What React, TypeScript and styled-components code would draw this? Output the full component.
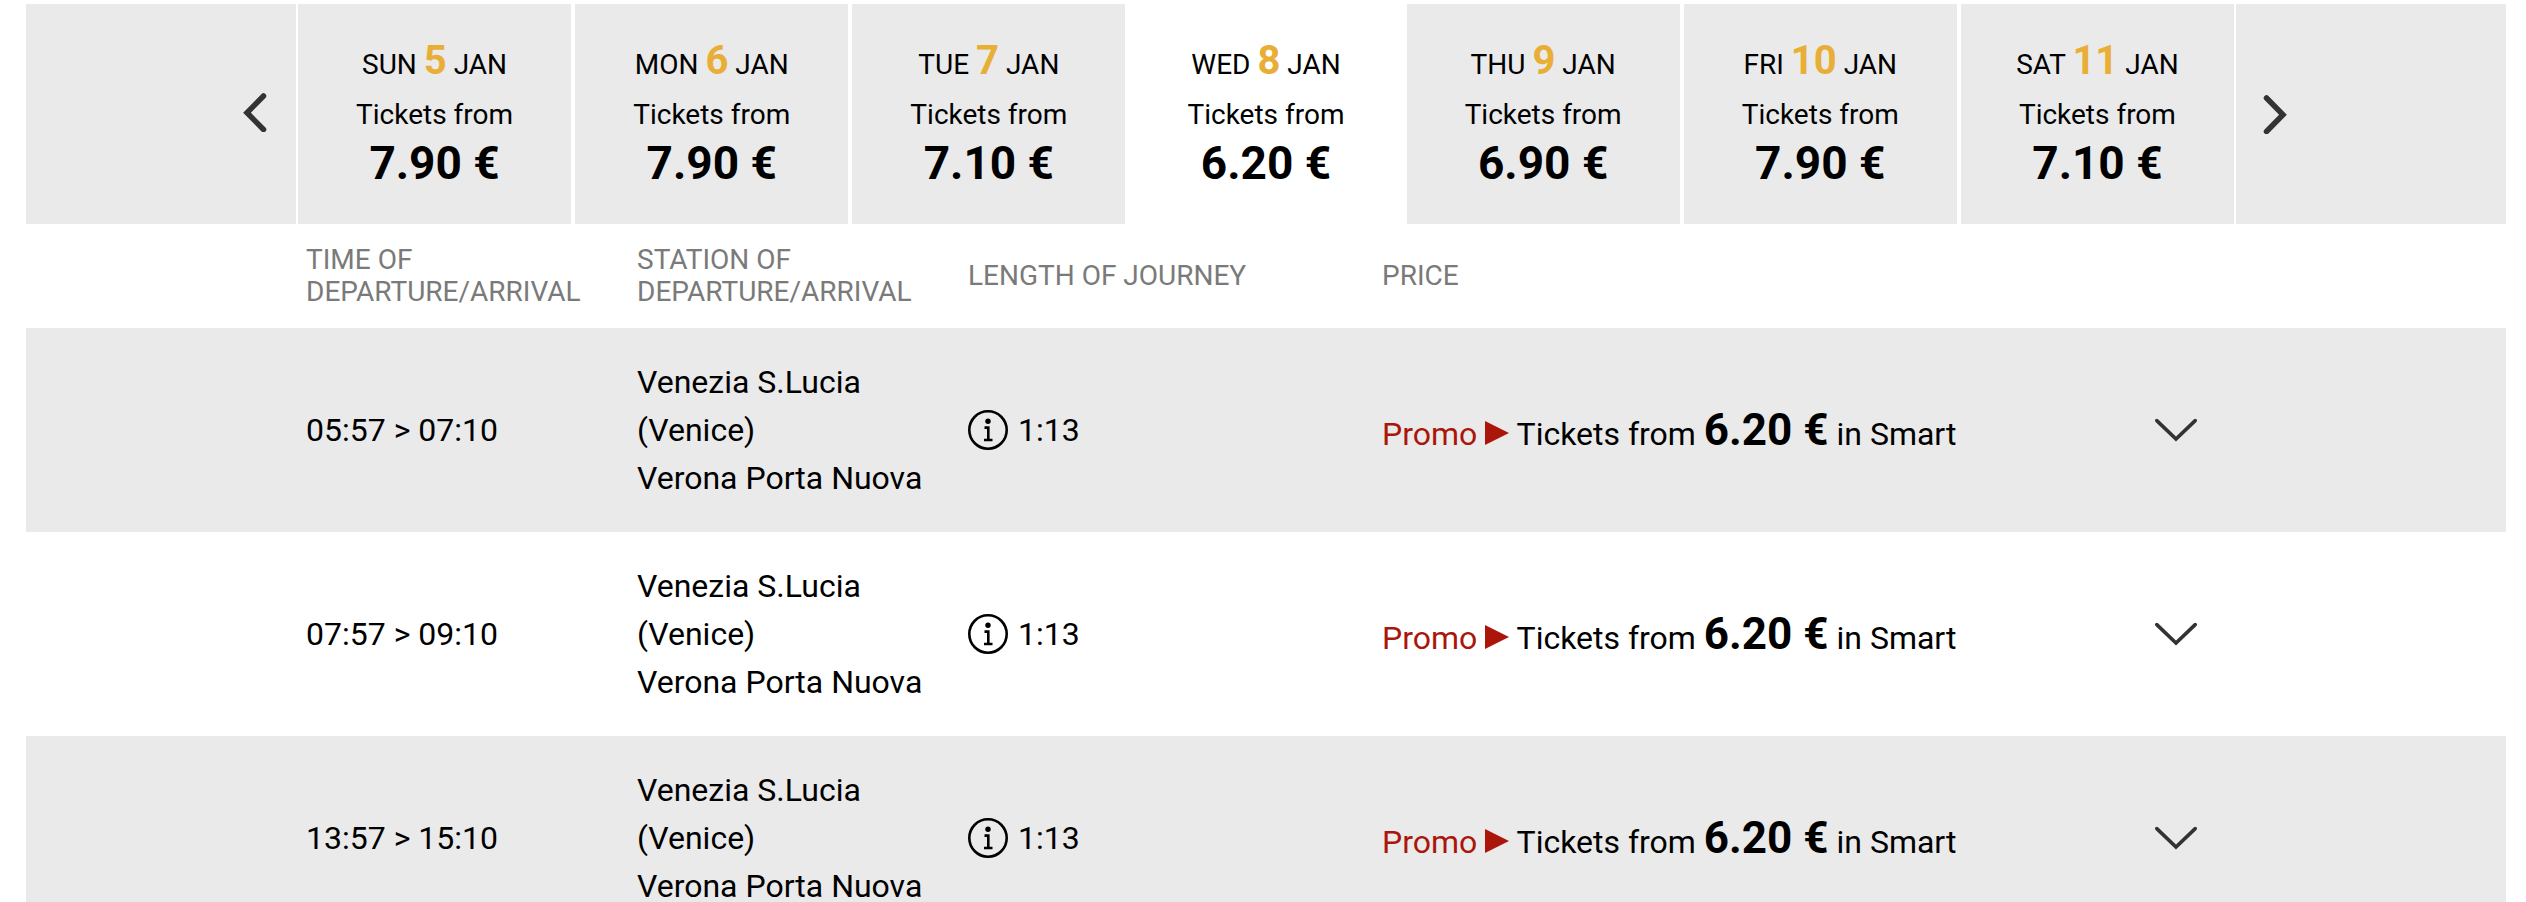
import React from "react";
import styled, { createGlobalStyle } from "styled-components";

const GlobalStyle = createGlobalStyle`
  *, *::before, *::after { box-sizing: border-box; }
  body {
    margin: 0;
    background: #fff;
    color: #000;
    font-family: Roboto, "Liberation Sans", sans-serif;
  }
`;

const Page = styled.main`
  padding: 4px 20px 0 26px;
`;

const DateBar = styled.nav`
  display: grid;
  grid-template-columns: minmax(80px, 1fr) minmax(0, 1940px) minmax(80px, 1fr);
  height: 220px;
`;

const ArrowButton = styled.button<{ $side: "left" | "right" }>`
  display: flex;
  align-items: center;
  justify-content: ${(p) => (p.$side === "left" ? "flex-end" : "flex-start")};
  padding: ${(p) => (p.$side === "left" ? "0 28px 4px 0" : "0 0 0 26px")};
  border: 0;
  background: #eaeaea;
  color: #333;
  cursor: pointer;
`;

const Days = styled.div`
  display: flex;
`;

const DayButton = styled.button<{ $active: boolean }>`
  flex: 1 1 0;
  min-width: 0;
  padding: 0 0 4px;
  border: 0 solid #fff;
  border-width: 0 2px;
  background: ${(p) => (p.$active ? "#fff" : "#eaeaea")};
  color: #000;
  font-family: inherit;
  font-size: 28px;
  line-height: 48px;
  text-align: center;
  cursor: pointer;
`;

const DayName = styled.span`
  display: block;
  margin-bottom: 2px;
`;

const DayLabel = styled.span`
  display: block;
`;

const DayNumber = styled.b`
  color: #e8ae36;
  font-size: 40px;
`;

const DayPrice = styled.b`
  display: block;
  font-size: 46px;
`;

const Timetable = styled.table`
  display: block;
  width: 100%;

  thead, tbody { display: block; }
`;

const Row = styled.tr`
  display: grid;
  grid-template-columns: 331fr 331fr 414fr 744fr 120fr;
  align-items: center;
  padding: 30px max(0px, calc((100% - 1940px) / 2));

  tbody &:nth-child(odd) { background: #eaeaea; }
`;

const HeadRow = styled(Row)`
  padding-top: 20px;
  padding-bottom: 20px;
`;

const HeadCell = styled.th`
  padding: 0 0 0 10px;
  color: #7a7a7a;
  font-size: 28px;
  font-weight: 400;
  line-height: 32px;
  text-align: left;
`;

const Cell = styled.td`
  min-width: 0;
  padding: 0 0 0 10px;
  font-size: 32px;
  line-height: 48px;
`;

const FareCell = styled(Cell)`
  padding-top: 4px;
`;

const Duration = styled.div`
  display: flex;
  align-items: center;
  gap: 10px;
`;

const IconButton = styled.button`
  display: flex;
  padding: 0;
  border: 0;
  background: none;
  color: inherit;
  cursor: pointer;
`;

const ExpandCell = styled(Cell)`
  display: flex;
  justify-content: center;
  padding: 0;
  color: #333;
`;

const Promo = styled.span`
  color: #ab160b;
`;

const FarePrice = styled.b`
  font-size: 44px;
`;

const days = [
  { day: "SUN", num: 5, price: "7.90 €" },
  { day: "MON", num: 6, price: "7.90 €" },
  { day: "TUE", num: 7, price: "7.10 €" },
  { day: "WED", num: 8, price: "6.20 €" },
  { day: "THU", num: 9, price: "6.90 €" },
  { day: "FRI", num: 10, price: "7.90 €" },
  { day: "SAT", num: 11, price: "7.10 €" },
];

const journeys = ["05:57 > 07:10", "07:57 > 09:10", "13:57 > 15:10"];

const ArrowIcon = ({ side }: { side: "left" | "right" }) => (
  <svg width="26" height="40" viewBox="0 0 26 40" fill="none" stroke="currentColor" strokeWidth="5.5" strokeLinecap="round" aria-hidden="true">
    <path d={side === "left" ? "M21.5 4 5 20.7l16.5 16.8" : "M4.5 4 21 20.7 4.5 37.5"} />
  </svg>
);

const InfoIcon = () => (
  <svg width="40" height="40" viewBox="0 0 40 40" fill="none" stroke="currentColor" strokeWidth="2.6" aria-hidden="true">
    <circle cx="20" cy="20" r="18.7" />
    <circle cx="20" cy="11.2" r="2.7" fill="currentColor" stroke="none" />
    <path d="M16.5 17.6h3.8v12.3M16 30h8.5" />
  </svg>
);

const PromoArrow = () => (
  <svg width="24" height="24" viewBox="0 0 24 24" fill="currentColor" aria-hidden="true">
    <path d="M0 0v24l24-12z" />
  </svg>
);

const ExpandIcon = () => (
  <svg width="44" height="24" viewBox="0 0 44 24" fill="none" stroke="currentColor" strokeWidth="3.6" strokeLinecap="round" aria-hidden="true">
    <path d="M2.8 2.6 22 21 41.2 2.6" />
  </svg>
);

export default function App() {
  return (
    <>
      <GlobalStyle />
      <Page>
        <DateBar aria-label="Travel date">
          <ArrowButton $side="left" aria-label="Previous days"><ArrowIcon side="left" /></ArrowButton>
          <Days>
            {days.map((d) => (
              <DayButton key={d.num} $active={d.num === 8} aria-pressed={d.num === 8}>
                <DayName>{d.day} <DayNumber>{d.num}</DayNumber> JAN</DayName>
                <DayLabel>Tickets from</DayLabel>
                <DayPrice>{d.price}</DayPrice>
              </DayButton>
            ))}
          </Days>
          <ArrowButton $side="right" aria-label="Next days"><ArrowIcon side="right" /></ArrowButton>
        </DateBar>
        <Timetable>
          <thead>
            <HeadRow>
              <HeadCell scope="col">TIME OF<br />DEPARTURE/ARRIVAL</HeadCell>
              <HeadCell scope="col">STATION OF<br />DEPARTURE/ARRIVAL</HeadCell>
              <HeadCell scope="col">LENGTH OF JOURNEY</HeadCell>
              <HeadCell scope="col">PRICE</HeadCell>
            </HeadRow>
          </thead>
          <tbody>
            {journeys.map((time) => (
              <Row key={time}>
                <Cell>{time}</Cell>
                <Cell>Venezia S.Lucia<br />(Venice)<br />Verona Porta Nuova</Cell>
                <Cell>
                  <Duration>
                    <IconButton aria-label="Journey details"><InfoIcon /></IconButton>
                    1:13
                  </Duration>
                </Cell>
                <FareCell>
                  <Promo>Promo <PromoArrow /></Promo> Tickets from <FarePrice>6.20 €</FarePrice> in Smart
                </FareCell>
                <ExpandCell>
                  <IconButton aria-label="Show fares"><ExpandIcon /></IconButton>
                </ExpandCell>
              </Row>
            ))}
          </tbody>
        </Timetable>
      </Page>
    </>
  );
}
